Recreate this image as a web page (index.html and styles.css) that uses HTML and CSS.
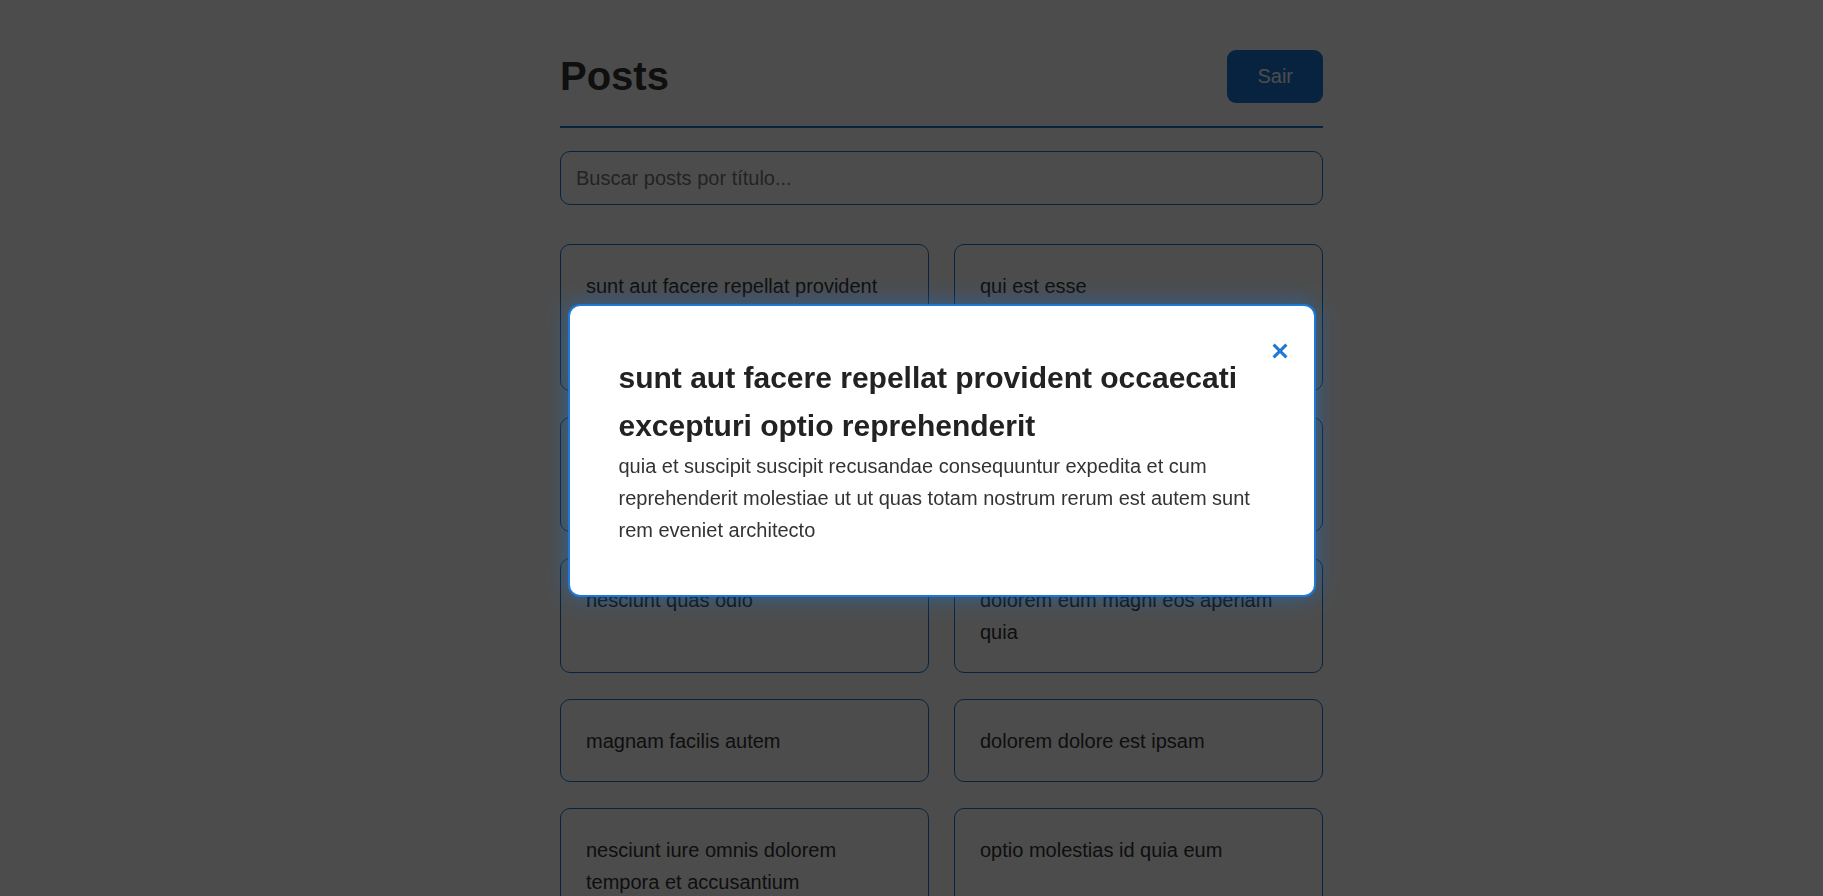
FILE: index.html
```html
<!DOCTYPE html>
<html lang="pt-BR">
<head>
<meta charset="utf-8">
<title>Posts</title>
<link rel="stylesheet" href="styles.css">
</head>
<body>
<div class="page">
  <div class="container">
    <header class="header">
      <h1 class="title">Posts</h1>
      <button class="logout">Sair</button>
    </header>
    <input class="search" type="text" placeholder="Buscar posts por título...">
    <div class="grid">
      <div class="card"><h3 class="card-title">sunt aut facere repellat provident occaecati excepturi optio reprehenderit</h3></div>
      <div class="card"><h3 class="card-title">qui est esse</h3></div>
      <div class="card"><h3 class="card-title">ea molestias quasi exercitationem repellat qui ipsa sit aut</h3></div>
      <div class="card"><h3 class="card-title">eum et est occaecati</h3></div>
      <div class="card"><h3 class="card-title">nesciunt quas odio</h3></div>
      <div class="card"><h3 class="card-title">dolorem eum magni eos aperiam quia</h3></div>
      <div class="card"><h3 class="card-title">magnam facilis autem</h3></div>
      <div class="card"><h3 class="card-title">dolorem dolore est ipsam</h3></div>
      <div class="card"><h3 class="card-title">nesciunt iure omnis dolorem tempora et accusantium</h3></div>
      <div class="card"><h3 class="card-title">optio molestias id quia eum</h3></div>
    </div>
  </div>
</div>
<div class="overlay">
  <div class="modal">
    <button class="close" aria-label="Fechar">
      <svg width="16" height="16" viewBox="0 0 16 16"><path d="M1.6 1.6 L14.4 14.4 M14.4 1.6 L1.6 14.4" stroke="#1e78d6" stroke-width="3" fill="none"/></svg>
    </button>
    <h2 class="modal-title">sunt aut facere repellat provident occaecati excepturi optio reprehenderit</h2>
    <p class="modal-body">quia et suscipit suscipit recusandae consequuntur expedita et cum reprehenderit molestiae ut ut quas totam nostrum rerum est autem sunt rem eveniet architecto</p>
  </div>
</div>
</body>
</html>
```
FILE: styles.css
```css
* { box-sizing: border-box; }
html, body { margin: 0; padding: 0; }
body {
  background: #ffffff;
  font-family: "Liberation Sans", Arial, sans-serif;
  font-size: 20px;
  color: #333;
}
.page {
  padding-left: 60px;
}
.container {
  width: 763px;
  margin: 0 auto;
  padding-top: 50px;
}
.header {
  display: flex;
  justify-content: space-between;
  align-items: center;
  padding-bottom: 23px;
  border-bottom: 2px solid #1976d2;
  margin-bottom: 23px;
}
.title {
  margin: 0;
  font-size: 40px;
  font-weight: bold;
  color: #333;
  line-height: normal;
}
.logout {
  background: #1976d2;
  color: #fff;
  border: none;
  border-radius: 9px;
  font-family: "Liberation Sans", Arial, sans-serif;
  font-size: 20px;
  line-height: 23px;
  padding: 15px 30px;
  cursor: pointer;
}
.search {
  display: block;
  width: 100%;
  height: 54px;
  padding: 0 15px;
  border: 1px solid #1976d2;
  border-radius: 10px;
  font-family: "Liberation Sans", Arial, sans-serif;
  font-size: 20px;
  color: #333;
  margin: 0 0 39px 0;
  outline: none;
}
.search::placeholder { color: #757575; }
.grid {
  display: grid;
  grid-template-columns: 1fr 1fr;
  column-gap: 25px;
  row-gap: 26px;
  padding-bottom: 40px;
}
.card {
  border: 1px solid #1976d2;
  border-radius: 10px;
  background: #fff;
  padding: 24.5px 25px;
  cursor: pointer;
}
.card-title {
  margin: 0;
  font-size: 20px;
  font-weight: normal;
  line-height: 32px;
  color: #333;
}
.overlay {
  position: fixed;
  inset: 0;
  background: rgba(0, 0, 0, 0.7);
  display: flex;
  align-items: center;
  justify-content: center;
  padding-left: 60px;
  padding-top: 4px;
}
.modal {
  position: relative;
  width: 748px;
  background: #fff;
  border: 2px solid #1e78d6;
  border-radius: 12px;
  padding: 48px 49px 49px 49px;
  box-shadow: 0 0 22px rgba(25, 118, 210, 0.55);
}
.close {
  position: absolute;
  top: 37px;
  right: 26px;
  width: 16px;
  height: 16px;
  padding: 0;
  border: none;
  background: transparent;
  display: flex;
  cursor: pointer;
}
.modal-title {
  margin: 0;
  font-size: 30px;
  font-weight: bold;
  line-height: 48px;
  color: #222;
}
.modal-body {
  margin: 0;
  font-size: 20px;
  line-height: 32px;
  color: #333;
}
```
